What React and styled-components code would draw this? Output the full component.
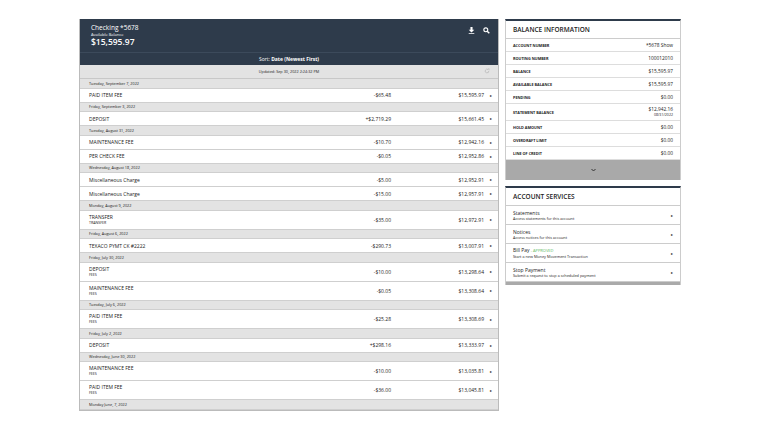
import React from "react";
import styled, { createGlobalStyle } from "styled-components";

const G = createGlobalStyle`
  body{margin:0;background:#fff;font-family:"Open Sans",sans-serif;color:#222;}
`;
const Page = styled.div`display:flex;align-items:flex-start;gap:6px;padding:19px 0 0 79px;`;
const Left = styled.div`width:418px;border:1px solid #bbb;border-top:none;background:#fff;`;
const Head = styled.div`background:#2e3b4b;color:#fff;height:33px;padding:5px 0 0 11px;box-sizing:border-box;display:flex;justify-content:space-between;`;
const Title = styled.div`font-size:6.5px;line-height:7px;`;
const Sub = styled.div`font-size:4px;line-height:5px;margin-top:1px;`;
const Big = styled.div`font-size:8.5px;font-weight:600;line-height:9px;`;
const Icons = styled.div`display:flex;gap:8px;padding:3px 8px 0 0;`;
const Sort = styled.div`background:#2e3b4b;border-top:1px solid #3c4a5b;color:#fff;height:12px;font-size:5px;display:flex;align-items:center;justify-content:center;`;
const Upd = styled.div`background:#e3e3e3;height:13px;font-size:3.8px;display:flex;align-items:center;justify-content:center;position:relative;border-bottom:1px solid #c8c8c8;`;
const Refresh = styled.div`position:absolute;right:8px;top:3px;`;
const DateH = styled.div`background:#e3e3e3;height:9.5px;font-size:3.8px;display:flex;align-items:center;padding-left:9px;border-bottom:1px solid #cfcfcf;box-sizing:border-box;`;
const Row = styled.div`height:${p=>p.$two?19:14}px;display:grid;grid-template-columns:1fr 80px 93px 14px;align-items:center;font-size:5px;padding-left:9px;border-bottom:1px solid #cfcfcf;box-sizing:border-box;`;
const Desc = styled.div`line-height:6px;`;
const Small = styled.div`font-size:3.6px;`;
const R = styled.div`text-align:right;`;
const Chev = styled.div`font-size:4px;text-align:center;`;

const Right = styled.div`width:176px;display:flex;flex-direction:column;gap:6px;`;
const Card = styled.div`border-top:2px solid #2e3b4b;border-left:1px solid #ccc;border-right:1px solid #ccc;background:#fff;`;
const CardT = styled.div`font-size:6.5px;font-weight:600;height:17px;display:flex;align-items:center;padding-left:7px;border-bottom:1px solid #ccc;`;
const BRow = styled.div`height:${p=>p.$h||13}px;display:flex;justify-content:space-between;align-items:center;padding:0 7px;border-bottom:1px solid #ddd;font-size:4.8px;box-sizing:border-box;`;
const Lab = styled.div`font-size:3.8px;font-weight:700;`;
const Val = styled.div`text-align:right;line-height:5px;`;
const Tiny = styled.div`font-size:3.6px;`;
const Foot = styled.div`background:#a9a9a9;height:20px;display:flex;align-items:center;justify-content:center;font-size:5px;`;
const SRow = styled.div`height:19px;display:flex;justify-content:space-between;align-items:center;padding:0 7px;border-bottom:1px solid #ccc;box-sizing:border-box;`;
const ST = styled.div`font-size:5px;line-height:6px;`;
const SD = styled.div`font-size:3.8px;line-height:5px;`;
const Green = styled.span`color:#5cb85c;font-size:4px;`;
const SFoot = styled.div`height:3px;background:#aaa;`;

const data = [
  ["Tuesday, September 7, 2022", [["PAID ITEM FEE","","-$65.48","$15,595.97"]]],
  ["Friday, September 3, 2022", [["DEPOSIT","","+$2,719.29","$15,661.45"]]],
  ["Tuesday, August 31, 2022", [["MAINTENANCE FEE","","-$10.70","$12,942.16"],["PER CHECK FEE","","-$0.05","$12,952.86"]]],
  ["Wednesday, August 18, 2022", [["Miscellaneous Charge","","-$5.00","$12,952.91"],["Miscellaneous Charge","","-$15.00","$12,957.91"]]],
  ["Monday, August 9, 2022", [["TRANSFER","TRANSFER","-$35.00","$12,972.91"]]],
  ["Friday, August 6, 2022", [["TEXACO PYMT CK #2222","","-$290.73","$13,007.91"]]],
  ["Friday, July 30, 2022", [["DEPOSIT","FEES","-$10.00","$13,298.64"],["MAINTENANCE FEE","FEES","-$0.05","$13,308.64"]]],
  ["Tuesday, July 6, 2022", [["PAID ITEM FEE","FEES","-$25.28","$13,308.69"]]],
  ["Friday, July 2, 2022", [["DEPOSIT","","+$298.16","$13,333.97"]]],
  ["Wednesday, June 30, 2022", [["MAINTENANCE FEE","FEES","-$10.00","$13,035.81"],["PAID ITEM FEE","FEES","-$36.00","$13,045.81"]]],
  ["Monday June, 7, 2022", []],
];

const bal = [
  ["ACCOUNT NUMBER","*5678 Show"],["ROUTING NUMBER","100012010"],["BALANCE","$15,595.97"],
  ["AVAILABLE BALANCE","$15,595.97"],["PENDING","$0.00"],["STATEMENT BALANCE","$12,942.16","08/31/2022"],
  ["HOLD AMOUNT","$0.00"],["OVERDRAFT LIMIT","$0.00"],["LINE OF CREDIT","$0.00"],
];

const svc = [
  ["Statements","Access statements for this account"],
  ["Notices","Access notices for this account"],
  ["Bill Pay","Start a new Money Movement Transaction",true],
  ["Stop Payment","Submit a request to stop a scheduled payment"],
];

export default function App(){
  return <><G/><Page>
    <Left>
      <Head>
        <div><Title>Checking *5678</Title><Sub>Available Balance</Sub><Big>$15,595.97</Big></div>
        <Icons>
          <svg width="7" height="7" viewBox="0 0 10 10"><path d="M3.5 0h3v4h2.5L5 8 1 4h2.5z M1 9h8v1H1z" fill="#fff"/></svg>
          <svg width="7" height="7" viewBox="0 0 10 10"><circle cx="4" cy="4" r="2.8" stroke="#fff" strokeWidth="1.6" fill="none"/><path d="M6 6l3 3" stroke="#fff" strokeWidth="2"/></svg>
        </Icons>
      </Head>
      <Sort>Sort:&nbsp;<b>Date (Newest First)</b></Sort>
      <Upd>Updated: Sep 30, 2022 2:24:32 PM<Refresh><svg width="6" height="6" viewBox="0 0 10 10"><path d="M8 5a3 3 0 1 1-1-2.2" stroke="#bbb" strokeWidth="1.4" fill="none"/><path d="M6 1h3v3z" fill="#bbb"/></svg></Refresh></Upd>
      {data.map(([d,rows])=><React.Fragment key={d}>
        <DateH>{d}</DateH>
        {rows.map((r,i)=><Row key={i} $two={!!r[1]}>
          <Desc>{r[0]}{r[1]&&<Small>{r[1]}</Small>}</Desc>
          <R>{r[2]}</R><R>{r[3]}</R><Chev>▸</Chev>
        </Row>)}
      </React.Fragment>)}
    </Left>
    <Right>
      <Card>
        <CardT>BALANCE INFORMATION</CardT>
        {bal.map(b=><BRow key={b[0]} $h={b[2]?17:13}><Lab>{b[0]}</Lab><Val>{b[1]}{b[2]&&<Tiny>{b[2]}</Tiny>}</Val></BRow>)}
        <Foot><svg width="5" height="4" viewBox="0 0 10 6"><path d="M1 1l4 4 4-4" stroke="#333" strokeWidth="2" fill="none"/></svg></Foot>
      </Card>
      <Card>
        <CardT>ACCOUNT SERVICES</CardT>
        {svc.map(s=><SRow key={s[0]}><div><ST>{s[0]}{s[2]&&<Green> - APPROVED</Green>}</ST><SD>{s[1]}</SD></div><Chev>▸</Chev></SRow>)}
        <SFoot/>
      </Card>
    </Right>
  </Page></>;
}
